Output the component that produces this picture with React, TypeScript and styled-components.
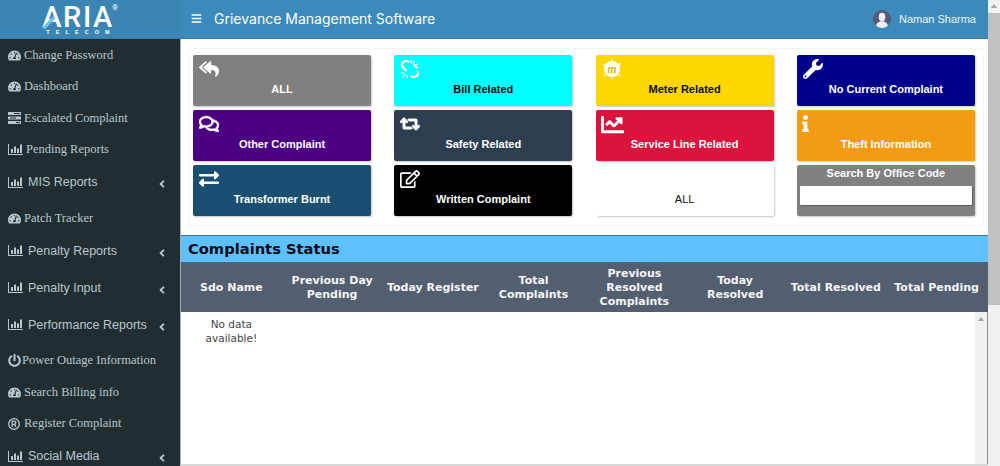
import React from "react";
import styled, { createGlobalStyle } from "styled-components";
import {
  FaAngleLeft,
  FaBars,
  FaChartLine,
  FaExchangeAlt,
  FaInfo,
  FaPowerOff,
  FaRegComments,
  FaRegEdit,
  FaReplyAll,
  FaRetweet,
  FaTachometerAlt,
  FaWrench,
} from "react-icons/fa";

const Global = createGlobalStyle`
  html, body { margin: 0; padding: 0; background: #fff; overflow: hidden; }
  * { box-sizing: border-box; }
`;

const Root = styled.div`
  width: 1000px;
  height: 466px;
  display: flex;
  overflow: hidden;
  font-family: "Liberation Sans", Arial, sans-serif;
`;
const Page = styled.div`
  width: 988px;
  display: flex;
  flex-direction: column;
`;
const Header = styled.header`
  height: 38.5px;
  flex: none;
  display: flex;
  align-items: center;
  background: #3b8abb;
  border-bottom: 1px solid #3a7ca5;
  color: #fff;
`;
const LogoBox = styled.div`
  width: 180px;
  height: 100%;
  display: flex;
  flex-direction: column;
  align-items: center;
  padding: 5px 24px 0 0;
  background: #3a85b4;
`;
const LogoWord = styled.div`
  position: relative;
  font-family: "Roboto", sans-serif;
  font-weight: 500;
  font-size: 29px;
  line-height: 24px;
  letter-spacing: 1.6px;
  color: #fff;
`;
const LogoSlash = styled.svg`
  position: absolute;
  left: 0;
  top: 2px;
`;
const LogoMark = styled.sup`
  position: absolute;
  right: -4px;
  top: 0;
  font-size: 7px;
  line-height: 7px;
  font-weight: 400;
  letter-spacing: 0;
`;
const LogoSub = styled.div`
  font-family: "Liberation Sans", sans-serif;
  font-size: 5.5px;
  line-height: 6px;
  font-weight: 700;
  letter-spacing: 6.1px;
  margin-right: -6px;
  color: #fff;
`;
const MenuToggle = styled.span`
  display: flex;
  margin-left: 11px;
  font-size: 11px;
`;
const Title = styled.div`
  margin-left: 12px;
  font-family: "Inter", sans-serif;
  font-size: 14px;
`;
const UserBox = styled.div`
  margin-left: auto;
  display: flex;
  align-items: center;
  gap: 8px;
  padding-right: 12px;
  font-family: "Liberation Sans", sans-serif;
  font-size: 11px;
  color: #f0f6fa;
`;
const Body = styled.div`
  flex: 1;
  min-height: 0;
  display: flex;
`;
const Sidebar = styled.nav`
  width: 180px;
  flex: none;
  background: #222d32;
  padding-top: 0.8px;
  color: #b8c7ce;
`;
const MenuItem = styled.div<{ $sans?: boolean; $gap: number }>`
  display: flex;
  align-items: center;
  height: ${(p) => (p.$sans ? 37 : 31.5)}px;
  padding: 0 12px ${(p) => (p.$sans ? 3 : 0)}px 8px;
  gap: ${(p) => p.$gap}px;
  font-family: ${(p) => (p.$sans ? '"Liberation Sans", sans-serif' : '"Liberation Serif", serif')};
  font-size: 12.5px;
  white-space: nowrap;
`;
const MenuIcon = styled.span`
  display: flex;
  font-size: 13px;
`;
const Chevron = styled.span`
  display: flex;
  margin-left: auto;
  font-size: 12px;
  padding-top: 4px;
`;
const Main = styled.main`
  flex: 1;
  min-width: 0;
  display: flex;
  flex-direction: column;
  border-left: 1px solid #a3abaf;
  border-bottom: 2px solid #d8d8d8;
`;
const Panel = styled.section`
  margin: 9px 4px 9px 7px;
  padding: 6px 0 9px 4px;
  height: 178px;
  border: 1px solid #f4f4f4;
  border-radius: 3px;
  display: grid;
  grid-template-columns: repeat(4, 178px);
  grid-auto-rows: 51px;
  column-gap: 23.3px;
  row-gap: 4px;
`;
const Card = styled.div<{ $bg: string; $fg: string }>`
  position: relative;
  background: ${(p) => p.$bg};
  color: ${(p) => p.$fg};
  border-radius: 2px;
  box-shadow: 1px 1px 2px rgba(0, 0, 0, 0.22);
  padding: 4px 0 0 6px;
  display: flex;
  flex-direction: column;
`;
const CardIcon = styled.span`
  display: flex;
  height: 21px;
  font-size: 20px;
  color: #fff;
`;
const CardLabel = styled.div<{ $plain?: boolean }>`
  margin: 1px 0 0 -6px;
  text-align: center;
  font-size: 11px;
  line-height: 16px;
  font-weight: ${(p) => (p.$plain ? 400 : 700)};
`;
const SearchCard = styled.div`
  background: #808080;
  color: #fff;
  border-radius: 2px;
  box-shadow: 1px 1px 2px rgba(0, 0, 0, 0.22);
  padding: 1px 3px 0;
  display: flex;
  flex-direction: column;
  align-items: stretch;
  text-align: center;
  font-size: 11px;
  line-height: 14px;
  font-weight: 700;
`;
const SearchInput = styled.input`
  height: 19px;
  margin-top: 6px;
  border: none;
  border-radius: 1px;
  background: #fff;
  box-shadow: 1px 1px 1px rgba(0, 0, 0, 0.3);
  outline: none;
`;
const StatusTitle = styled.h2`
  margin: 0;
  height: 27px;
  flex: none;
  background: #5ec0ff;
  border-top: 1px solid #3a7ca5;
  padding-left: 7px;
  font-family: "DejaVu Sans", sans-serif;
  font-size: 14.7px;
  line-height: 26px;
  font-weight: 700;
  color: #0a0a14;
`;
const Columns = styled.div`
  display: grid;
  grid-template-columns: repeat(8, 100.75px);
`;
const HeadRow = styled(Columns)`
  height: 50px;
  flex: none;
  background: #535f70;
  color: #f4f6f8;
`;
const HeadCell = styled.div`
  display: flex;
  align-items: center;
  justify-content: center;
  text-align: center;
  padding: 3px 3.5px 0;
  font-family: "DejaVu Sans", sans-serif;
  font-size: 11px;
  line-height: 14.2px;
  font-weight: 700;
`;
const TableBody = styled.div`
  flex: 1;
  min-height: 0;
  display: flex;
`;
const Rows = styled(Columns)`
  flex: 1;
  min-width: 0;
  overflow: hidden;
  align-content: start;
  padding-top: 5px;
`;
const EmptyCell = styled.div`
  text-align: center;
  padding: 0 16px;
  font-family: "DejaVu Sans", sans-serif;
  font-size: 10.5px;
  line-height: 14px;
  color: #444;
`;
const InnerScrollbar = styled.div`
  width: 13px;
  flex: none;
  background: #f1f1f1;
  border-right: 1px solid #8f8f8f;
  display: flex;
  justify-content: center;
  align-items: flex-start;
  padding-top: 5px;
`;
const ArrowUp = styled.span`
  flex: none;
  width: 6px;
  height: 4px;
  border-left: 3px solid transparent;
  border-right: 3px solid transparent;
  border-bottom: 4px solid #a3a3a3;
`;
const PageScrollbar = styled.div`
  width: 12px;
  flex: none;
  background: #f1f1f1;
  display: flex;
  flex-direction: column;
  align-items: center;
  padding-top: 4px;
`;
const Thumb = styled.div`
  width: 100%;
  height: 292px;
  margin-top: 5px;
  background: #c1c1c1;
`;
const InfoGlyph = styled(FaInfo)`
  margin-left: -6px;
  margin-top: 1px;
  font-size: 17px;
`;
const HeavyRetweet = styled(FaRetweet)`
  stroke: currentColor;
  stroke-width: 30px;
`;
const HeavyComments = styled(FaRegComments)`
  stroke: currentColor;
  stroke-width: 20px;
`;
const WideChart = styled(FaChartLine)`
  font-size: 23px;
  margin: -1px 0 0 -1px;
`;

const ChartIcon = () => (
  <svg width="15" height="13" viewBox="0 0 15 13" fill="currentColor">
    <path d="M0 1h1v10h14v1H0z" />
    <path d="M3 6h2v4H3zM6 3.5h2V10H6zM9 5.5h2V10H9zM12 1.5h2V10h-2z" />
  </svg>
);
const RowsIcon = () => (
  <svg width="13" height="12" viewBox="0 0 13 12" fill="currentColor">
    <path d="M0 0h13v3H0zM0 4.5h13v3H0zM0 9h13v3H0z" />
    <path d="M6 1h6v1H6zM2 5.5h6v1H2zM8 10h4v1H8z" fill="#222d32" />
  </svg>
);
const RegisteredIcon = () => (
  <svg width="12" height="12" viewBox="0 0 12 12" fill="none" stroke="currentColor">
    <circle cx="6" cy="6" r="5.3" strokeWidth="1.3" />
    <path d="M4.2 9V3.2h2a1.6 1.6 0 0 1 0 3.2h-2M6.2 6.4 8 9" strokeWidth="1.3" />
  </svg>
);
const BrokenLinkIcon = () => (
  <svg width="20" height="20" viewBox="0 0 20 20" fill="none" stroke="#fff" strokeLinecap="round">
    <path d="M2.5 7.5a3 3 0 0 1 1-4.5l1.5-.8a3 3 0 0 1 3.6.8" strokeWidth="2.2" />
    <path d="M17.5 12.5a3 3 0 0 1-1 4.5l-1.5.8a3 3 0 0 1-3.6-.8" strokeWidth="2.2" />
    <path d="M3 8.5l3 3M14 5.5l3 3" strokeWidth="2.2" />
    <path d="M11 1v3M14.5 2l-1.5 2.5M18 5l-3 1M1 14h3M2.5 18l2.5-2.5M7 19v-3" strokeWidth="1.1" />
  </svg>
);
const MeterIcon = () => (
  <svg width="20" height="20" viewBox="0 0 20 20">
    <circle cx="10" cy="10" r="8" fill="#fff" />
    <g fill="#fff">
      <circle cx="1.6" cy="6" r="1" />
      <circle cx="18" cy="5" r="1" />
      <circle cx="10" cy="1" r="0.9" />
      <circle cx="2.5" cy="16.5" r="1" />
      <circle cx="17.5" cy="16" r="0.9" />
      <circle cx="10" cy="19.2" r="0.8" />
    </g>
    <text x="10" y="13.5" textAnchor="middle" fontSize="10" fontWeight="700" fontStyle="italic" fontFamily="Liberation Sans" fill="#d9b400">
      m
    </text>
  </svg>
);
const Avatar = () => (
  <svg width="18" height="18" viewBox="0 0 19 19">
    <circle cx="9.5" cy="9.5" r="9.5" fill="#545a7a" />
    <ellipse cx="9.5" cy="7.4" rx="3.5" ry="4.4" fill="#eef0f4" />
    <path d="M3.2 16.5c.6-3 3-3.6 4.6-4.5h3.4c1.6.9 4 1.5 4.6 4.5a9.5 9.5 0 0 1-12.6 0z" fill="#eef0f4" />
  </svg>
);

type Item = { label: string; icon: React.ReactNode; sans?: boolean; gap?: number };
const dash = <FaTachometerAlt />;
const chart = <ChartIcon />;
const menu: Item[] = [
  { label: "Change Password", icon: dash },
  { label: "Dashboard", icon: dash },
  { label: "Escalated Complaint", icon: <RowsIcon /> },
  { label: "Pending Reports", icon: chart, gap: 3 },
  { label: "MIS Reports", icon: chart, sans: true },
  { label: "Patch Tracker", icon: dash },
  { label: "Penalty Reports", icon: chart, sans: true },
  { label: "Penalty Input", icon: chart, sans: true },
  { label: "Performance Reports", icon: chart, sans: true },
  { label: "Power Outage Information", icon: <FaPowerOff />, gap: 1 },
  { label: "Search Billing info", icon: dash },
  { label: "Register Complaint", icon: <RegisteredIcon />, gap: 4 },
  { label: "Social Media", icon: chart, sans: true },
];

type CardDef = { label: string; bg: string; fg: string; icon?: React.ReactNode; plain?: boolean };
const cards: CardDef[] = [
  { label: "ALL", bg: "#808080", fg: "#fff", icon: <FaReplyAll /> },
  { label: "Bill Related", bg: "#00ffff", fg: "#0a0a0a", icon: <BrokenLinkIcon /> },
  { label: "Meter Related", bg: "#ffd700", fg: "#0a0a0a", icon: <MeterIcon /> },
  { label: "No Current Complaint", bg: "#00008b", fg: "#fff", icon: <FaWrench /> },
  { label: "Other Complaint", bg: "#4b0082", fg: "#fff", icon: <HeavyComments /> },
  { label: "Safety Related", bg: "#2c3e50", fg: "#fff", icon: <HeavyRetweet /> },
  { label: "Service Line Related", bg: "#dc143c", fg: "#fff", icon: <WideChart /> },
  { label: "Theft Information", bg: "#f39c12", fg: "#fff", icon: <InfoGlyph /> },
  { label: "Transformer Burnt", bg: "#1a4f72", fg: "#fff", icon: <FaExchangeAlt /> },
  { label: "Written Complaint", bg: "#000", fg: "#fff", icon: <FaRegEdit /> },
  { label: "ALL", bg: "#fff", fg: "#111", plain: true },
];

const columns: string[] = [
  "Sdo Name",
  "Previous Day Pending",
  "Today Register",
  "Total Complaints",
  "Previous Resolved Complaints",
  "Today Resolved",
  "Total Resolved",
  "Total Pending",
];

export default function App() {
  return (
    <Root>
      <Global />
      <Page>
        <Header>
          <LogoBox>
            <LogoWord>
              ARIA
              <LogoSlash width="18" height="22" viewBox="0 0 18 22">
                <path d="M0 21 L11 9 L13 12 L3 22 Z" fill="#6fc4ee" />
              </LogoSlash>
              <LogoMark>®</LogoMark>
            </LogoWord>
            <LogoSub>TELECOM</LogoSub>
          </LogoBox>
          <MenuToggle>
            <FaBars />
          </MenuToggle>
          <Title>Grievance Management Software</Title>
          <UserBox>
            <Avatar />
            Naman Sharma
          </UserBox>
        </Header>
        <Body>
          <Sidebar>
            {menu.map((m) => (
              <MenuItem key={m.label} $sans={m.sans} $gap={m.gap ?? (m.sans ? 5 : 3)}>
                <MenuIcon>{m.icon}</MenuIcon>
                {m.label}
                {m.sans && (
                  <Chevron>
                    <FaAngleLeft />
                  </Chevron>
                )}
              </MenuItem>
            ))}
          </Sidebar>
          <Main>
            <Panel>
              {cards.map((c, i) => (
                <Card key={i} $bg={c.bg} $fg={c.fg}>
                  <CardIcon>{c.icon}</CardIcon>
                  <CardLabel $plain={c.plain}>{c.label}</CardLabel>
                </Card>
              ))}
              <SearchCard>
                Search By Office Code
                <SearchInput />
              </SearchCard>
            </Panel>
            <StatusTitle>Complaints Status</StatusTitle>
            <HeadRow>
              {columns.map((c) => (
                <HeadCell key={c}>{c}</HeadCell>
              ))}
            </HeadRow>
            <TableBody>
              <Rows>
                <EmptyCell>No data available!</EmptyCell>
              </Rows>
              <InnerScrollbar>
                <ArrowUp />
              </InnerScrollbar>
            </TableBody>
          </Main>
        </Body>
      </Page>
      <PageScrollbar>
        <ArrowUp />
        <Thumb />
      </PageScrollbar>
    </Root>
  );
}
